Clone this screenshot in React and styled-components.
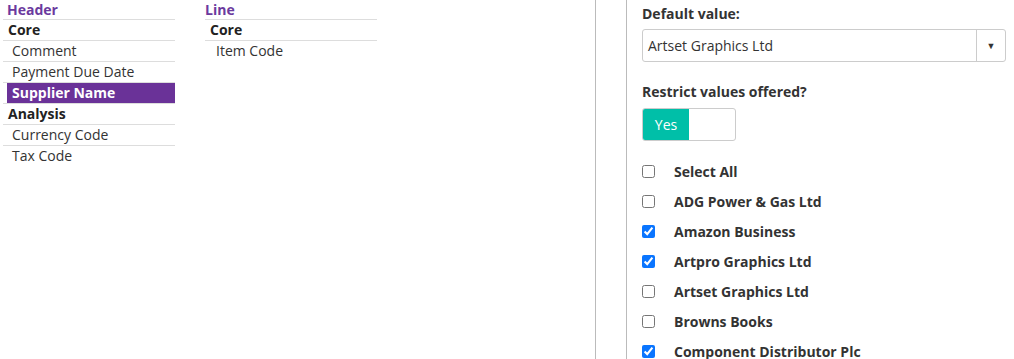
import React, { useState } from "react";
import styled, { createGlobalStyle } from "styled-components";

const GlobalStyle = createGlobalStyle`
  body {
    margin: 0;
    font-family: "Open Sans", "Liberation Sans", sans-serif;
    font-size: 14px;
    color: #333;
    background: #fff;
  }
`;

const Page = styled.div`
  display: flex;
  width: 1014px;
  height: 359px;
  overflow: hidden;
`;

const Lists = styled.div`
  display: flex;
  gap: 30px;
  padding-left: 3px;
  width: 592px;
`;

const FieldColumn = styled.div`
  width: 172px;
  display: flex;
  flex-direction: column;
`;

const ColumnTitle = styled.div`
  color: #6b3a9e;
  font-weight: 700;
  font-size: 14px;
  line-height: 19px;
  padding-left: ${(p) => p.$pad}px;
  border-bottom: 1px solid #ddd;
`;

const GroupRow = styled.div`
  font-weight: 700;
  line-height: 20px;
  padding-left: 5px;
  border-bottom: 1px solid #ddd;
  color: #222;
`;

const ItemRow = styled.div`
  padding-left: 4px;
  border-bottom: ${(p) => (p.$last ? "none" : "1px solid #ddd")};
`;

const ItemLabel = styled.div`
  line-height: 20px;
  padding-left: ${(p) => p.$indent}px;
  background: ${(p) => (p.$selected ? "#6a3298" : "transparent")};
  color: ${(p) => (p.$selected ? "#fff" : "#333")};
  font-weight: ${(p) => (p.$selected ? 700 : 400)};
`;

const Panel = styled.div`
  flex: 1;
  border-left: 1px solid #bbb;
  padding-left: 30px;
  display: flex;
`;

const PanelInner = styled.div`
  flex: 1;
  border-left: 1px solid #bbb;
  padding: 4px 8px 0 15px;
  display: flex;
  flex-direction: column;

  > * {
    flex-shrink: 0;
  }
`;

const FieldLabel = styled.div`
  font-weight: 700;
  line-height: 20px;
  color: #333;
  margin-bottom: 5px;
`;

const Select = styled.div`
  display: flex;
  height: 31px;
  border: 1px solid #ccc;
  border-radius: 3px;
  margin-bottom: 20px;
`;

const SelectValue = styled.div`
  flex: 1;
  padding-left: 5px;
  line-height: 31px;
  color: #333;
`;

const SelectArrow = styled.div`
  width: 28px;
  border-left: 1px solid #ccc;
  display: flex;
  align-items: center;
  justify-content: center;
  font-size: 9px;
  color: #333;
`;

const Toggle = styled.div`
  display: flex;
  width: 92px;
  height: 31px;
  border: 1px solid #ccc;
  border-radius: 3px;
  overflow: hidden;
  margin: 1px 0 15px;
`;

const ToggleOn = styled.div`
  width: 46px;
  background: #00bfa8;
  color: #fff;
  display: flex;
  align-items: center;
  justify-content: center;
`;

const CheckList = styled.div`
  display: flex;
  flex-direction: column;
`;

const CheckRow = styled.label`
  display: flex;
  align-items: center;
  height: 30px;
  flex-shrink: 0;
  font-weight: 700;
  color: #333;

  input {
    width: 13px;
    height: 13px;
    margin: 0 19px 0 0;
    accent-color: #0a75ff;
  }
`;

const headerGroups = [
  { name: "Core", items: ["Comment", "Payment Due Date", "Supplier Name"] },
  { name: "Analysis", items: ["Currency Code", "Tax Code"] },
];
const lineGroups = [{ name: "Core", items: ["Item Code"] }];

const suppliers = [
  { name: "Select All", checked: false },
  { name: "ADG Power & Gas Ltd", checked: false },
  { name: "Amazon Business", checked: true },
  { name: "Artpro Graphics Ltd", checked: true },
  { name: "Artset Graphics Ltd", checked: false },
  { name: "Browns Books", checked: false },
  { name: "Component Distributor Plc", checked: true },
];

const Column = ({ title, groups, selected, titlePad, indent }) => (
  <FieldColumn>
    <ColumnTitle $pad={titlePad}>{title}</ColumnTitle>
    {groups.map((g, gi) => (
      <React.Fragment key={g.name}>
        <GroupRow>{g.name}</GroupRow>
        {g.items.map((it, i) => (
          <ItemRow
            key={it}
            $last={gi === groups.length - 1 && i === g.items.length - 1}
          >
            <ItemLabel $indent={indent} $selected={it === selected}>
              {it}
            </ItemLabel>
          </ItemRow>
        ))}
      </React.Fragment>
    ))}
  </FieldColumn>
);

const App = () => {
  const [checks, setChecks] = useState(suppliers);

  const toggle = (name) => {
    setChecks(
      checks.map((c) => (c.name === name ? { ...c, checked: !c.checked } : c))
    );
  };

  return (
    <>
      <GlobalStyle />
      <Page>
        <Lists>
          <Column
            title="Header"
            groups={headerGroups}
            selected="Supplier Name"
            titlePad={4}
            indent={5}
          />
          <Column title="Line" groups={lineGroups} titlePad={0} indent={7} />
        </Lists>
        <Panel>
          <PanelInner>
            <FieldLabel>Default value:</FieldLabel>
            <Select>
              <SelectValue>Artset Graphics Ltd</SelectValue>
              <SelectArrow>▼</SelectArrow>
            </Select>
            <FieldLabel>Restrict values offered?</FieldLabel>
            <Toggle>
              <ToggleOn>Yes</ToggleOn>
            </Toggle>
            <CheckList>
              {checks.map((c) => (
                <CheckRow key={c.name}>
                  <input
                    type="checkbox"
                    checked={c.checked}
                    onChange={() => toggle(c.name)}
                  />
                  {c.name}
                </CheckRow>
              ))}
            </CheckList>
          </PanelInner>
        </Panel>
      </Page>
    </>
  );
};

export default App;
